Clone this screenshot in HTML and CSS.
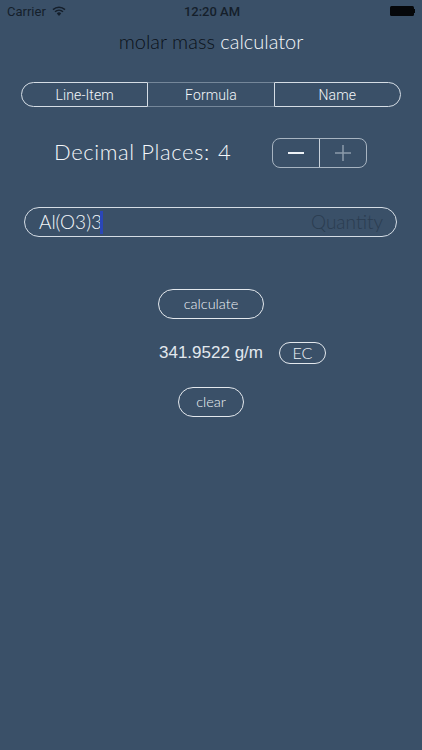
FILE: index.html
```html
<!DOCTYPE html>
<html lang="en">
<head>
    <meta charset="UTF-8">
    <meta name="viewport" content="width=device-width, initial-scale=1.0">
    <title>Molar Mass Calculator</title>
    <link rel="stylesheet" href="styles.css">
</head>
<body>
    <div class="statusbar">
        <div class="status-left">
            <span>Carrier</span>
            <svg class="wifi" width="14" height="10" viewBox="0 0 14 10">
                <path d="M7 10 4.8 7.4a3.2 3.2 0 0 1 4.4 0Z" fill="#151f2b"/>
                <path d="M1 3.6a8.8 8.8 0 0 1 12 0M3 5.7a6 6 0 0 1 8 0" fill="none" stroke="#151f2b" stroke-width="1.5"/>
            </svg>
        </div>
        <div class="status-time">12:20 AM</div>
        <div class="battery"><div class="battery-body"></div><div class="battery-tip"></div></div>
    </div>

    <h1 class="title"><span class="dark">molar mass</span> calculator</h1>

    <div class="segments">
        <div class="segment">Line-Item</div>
        <div class="segment active">Formula</div>
        <div class="segment">Name</div>
    </div>

    <div class="decimal-row">
        <div class="decimal-label"><span>Decimal Places:</span><span>4</span></div>
        <div class="stepper">
            <div class="step">
                <svg width="16" height="16" viewBox="0 0 16 16"><path d="M0 8H16" stroke="#eef2f6" stroke-width="2"/></svg>
            </div>
            <div class="step plus">
                <svg width="16" height="16" viewBox="0 0 16 16"><path d="M0 8H16M8 0V16" stroke="#8c9bab" stroke-width="1.5"/></svg>
            </div>
        </div>
    </div>

    <div class="field">
        <span class="formula">Al(O3)3</span><span class="caret"></span>
        <span class="quantity">Quantity</span>
    </div>

    <div class="actions">
        <button class="pill calculate">calculate</button>
        <div class="result-row">
            <span class="result">341.9522 g/m</span>
            <button class="pill ec">EC</button>
        </div>
        <button class="pill clear">clear</button>
    </div>
</body>
</html>
```

FILE: styles.css
```css
body {
    margin: 0;
    height: 750px;
    overflow: hidden;
    background: #3a5068;
    color: #f4f7fa;
    font-family: Lato, sans-serif;
}

/* Status bar */
.statusbar {
    height: 22px;
    padding: 0 7px;
    display: grid;
    grid-template-columns: 1fr auto 1fr;
    align-items: center;
    color: #151f2b;
    font-family: Roboto, sans-serif;
    font-size: 13px;
}

.status-left {
    display: flex;
    align-items: center;
    gap: 6px;
}

.status-time {
    font-weight: 500;
    font-size: 13px;
    margin-left: 2px;
}

.battery {
    display: flex;
    align-items: center;
    justify-content: flex-end;
}

.battery-body {
    width: 24px;
    height: 10px;
    background: #05070a;
    border-radius: 1.5px;
}

.battery-tip {
    width: 1.5px;
    height: 4px;
    background: #05070a;
}

/* Title */
.title {
    margin: 9px 0 0;
    height: 21px;
    text-align: center;
    font-size: 20px;
    line-height: 21px;
    font-weight: 300;
    color: #f4f7fa;
}

.dark {
    color: #0a1018;
}

/* Segmented control */
.segments {
    margin: 30px 21px 0;
    height: 25px;
    display: flex;
    font-family: Roboto, sans-serif;
    font-size: 14px;
    font-weight: 300;
    letter-spacing: 0.1px;
}

.segment {
    flex: 1;
    display: flex;
    align-items: center;
    justify-content: center;
    border: 1px solid #d5dde5;
}

.segment:first-child {
    border-radius: 13px 0 0 13px;
}

.segment:last-child {
    border-radius: 0 13px 13px 0;
}

.segment.active {
    border: 1px solid #75879a;
    border-left: 0;
    border-right: 0;
}

/* Decimal places */
.decimal-row {
    margin: 31px 55px 0 54px;
    height: 30px;
    display: flex;
    align-items: center;
    justify-content: space-between;
}

.decimal-label {
    display: flex;
    gap: 8px;
    padding-bottom: 3px;
    font-size: 22px;
    font-weight: 300;
    letter-spacing: 0.6px;
}

.stepper {
    width: 93px;
    height: 28px;
    display: flex;
    border: 1px solid #a7b4c1;
    border-radius: 8px;
}

.step {
    flex: 1;
    display: flex;
    align-items: center;
    justify-content: center;
}

.step.plus {
    border-left: 1px solid #c9d2db;
}

/* Formula field */
.field {
    margin: 39px 25px 0 24px;
    height: 28px;
    padding-left: 14px;
    padding-right: 13px;
    display: flex;
    align-items: center;
    border: 1px solid #d5dde5;
    border-radius: 15px;
    font-size: 19px;
    font-weight: 300;
}

.formula {
    padding-bottom: 1px;
}

.caret {
    width: 3px;
    height: 23px;
    margin-left: -2px;
    background: #2a46b8;
}

.quantity {
    margin-left: auto;
    padding-bottom: 1px;
    color: #2a3c50;
}

/* Buttons and result */
.actions {
    margin-top: 52px;
    display: flex;
    flex-direction: column;
    align-items: center;
}

.pill {
    padding: 0 0 1px;
    background: none;
    color: #eef2f6;
    border: 1px solid #e3e8ed;
    font-family: Lato, sans-serif;
    font-size: 14.5px;
    font-weight: 300;
}

.calculate {
    width: 106px;
    height: 30px;
    border-radius: 15px;
}

.result-row {
    margin: 23px 0 23px 63px;
    width: 167px;
    height: 22px;
    display: flex;
    align-items: center;
    justify-content: space-between;
}

.result {
    font-family: "Liberation Sans", sans-serif;
    font-size: 17px;
    color: #e2e8ee;
    white-space: nowrap;
}

.ec {
    width: 47px;
    height: 22px;
    padding-bottom: 3px;
    border-radius: 11px;
    font-size: 16px;
}

.clear {
    width: 66px;
    height: 30px;
    border-radius: 15px;
}
```
